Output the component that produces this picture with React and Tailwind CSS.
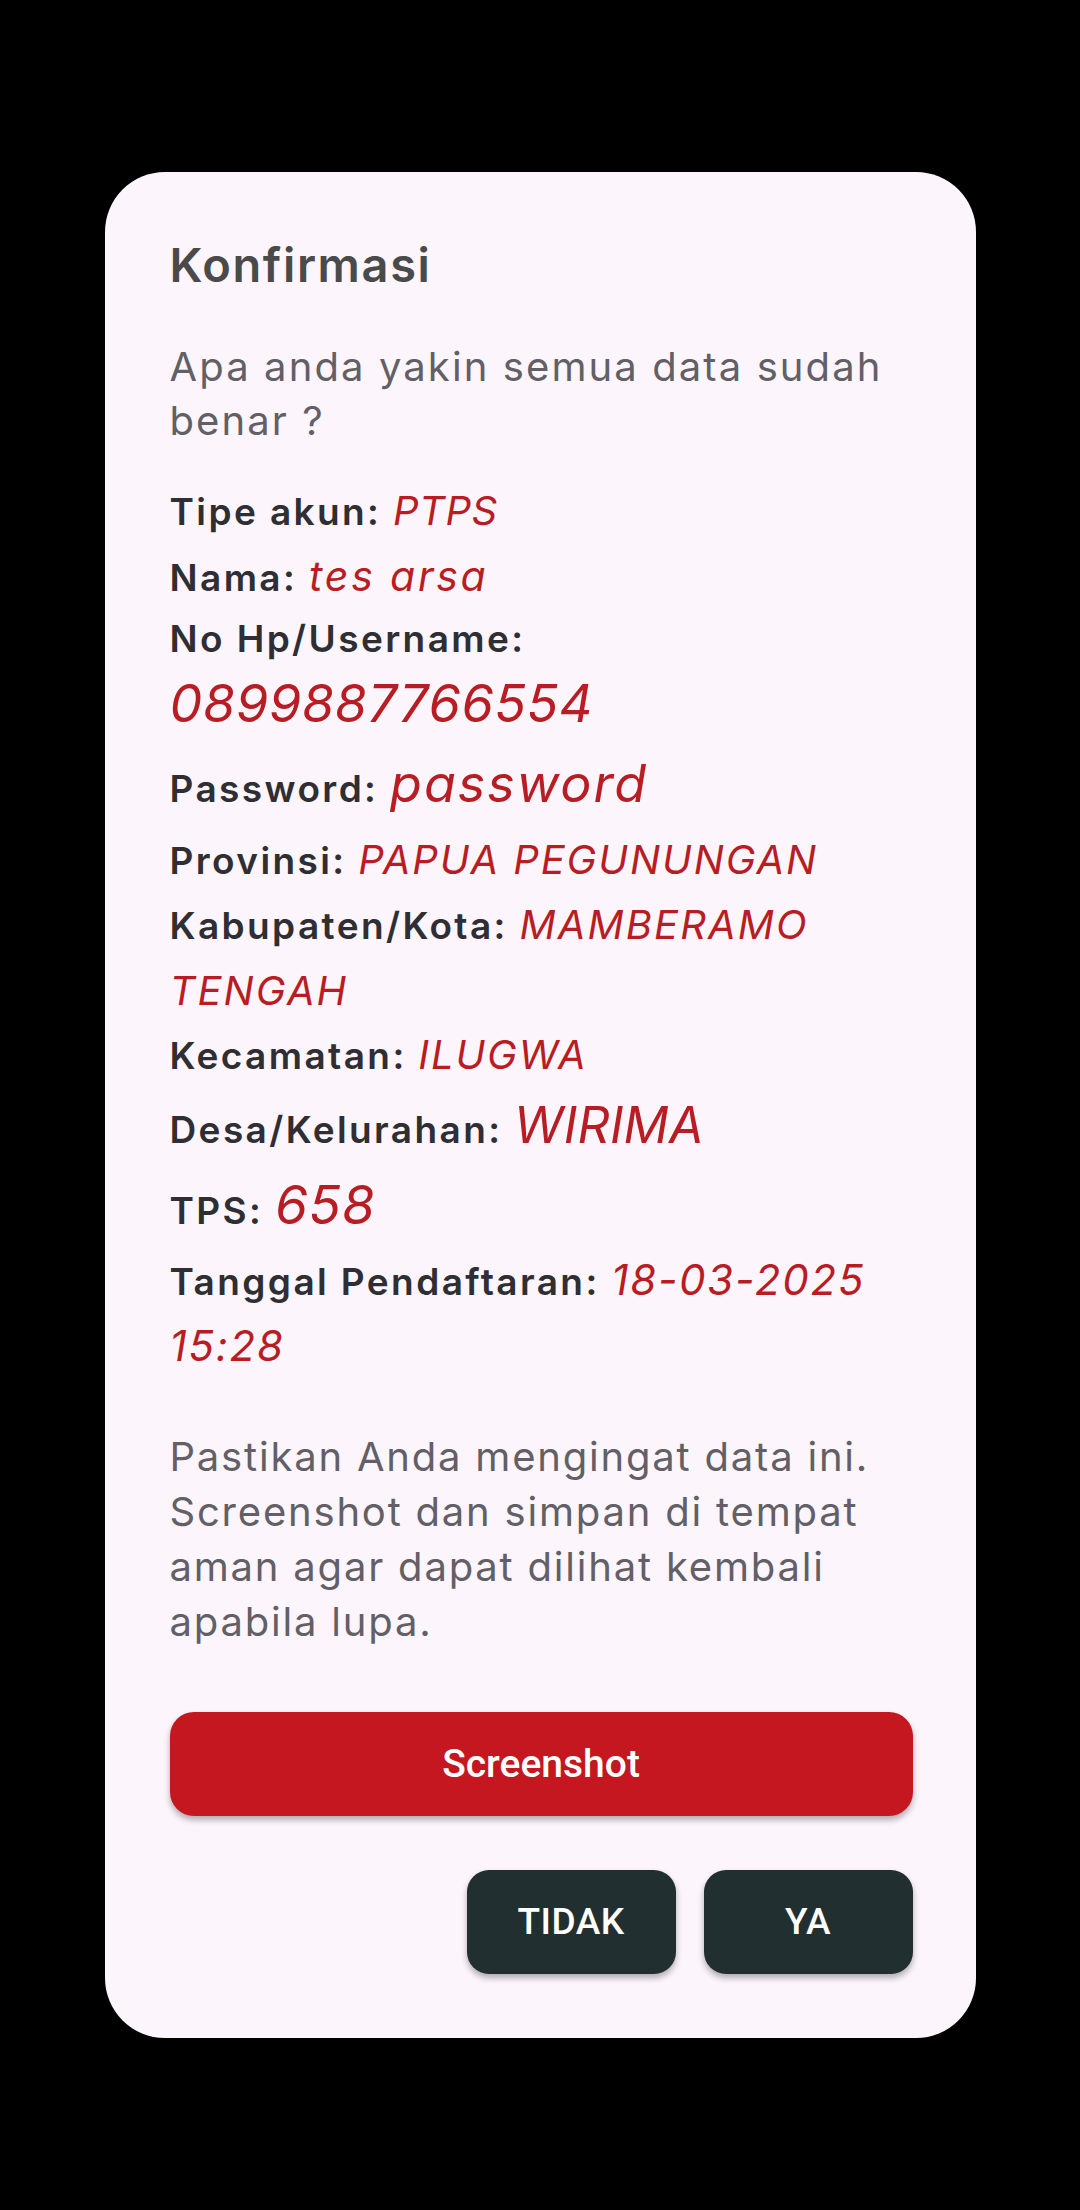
export default function App() {
    const val = 'italic font-normal text-[#b81d24]';

    return (
        <div className="min-h-[2210px] w-[1080px] bg-black pt-[172px] font-['Inter',sans-serif]">
            <div className="mx-auto w-[871px] rounded-[60px] bg-[#fcf5fc] pl-[65px] pr-[63px] pt-[63px] pb-[64px]">
                <h1 className="text-[47px] leading-[60px] font-semibold text-[#4a4a4a] tracking-[1.6px]">Konfirmasi</h1>

                <p className="mt-[45px] text-[40px] leading-[54px] text-[#625f66] tracking-[2.1px]">
                    Apa anda yakin semua data sudah benar ?
                </p>

                <div className="text-[#2e2e33] font-semibold text-[37px] tracking-[2.4px]">
                    <p className="mt-[31px] leading-[64px]">
                        Tipe akun: <span className={`${val} text-[40px] tracking-[0.5px]`}>PTPS</span>
                    </p>
                    <p className="leading-[64px]">
                        Nama: <span className={`${val} text-[41px] tracking-[2.8px]`}>tes arsa</span>
                    </p>
                    <p className="leading-[58px]">No Hp/Username:</p>
                    <p className={`${val} leading-[72px] text-[52px] tracking-[0.8px]`}>0899887766554</p>
                    <p className="mt-[4px] leading-[80px]">
                        Password: <span className={`${val} text-[52px] tracking-[2px]`}>password</span>
                    </p>
                    <p className="leading-[62px]">
                        Provinsi: <span className={`${val} text-[40px] tracking-[1.9px]`}>PAPUA PEGUNUNGAN</span>
                    </p>
                    <p className="leading-[65px]">
                        Kabupaten/Kota: <span className={`${val} text-[40px] tracking-[2.1px]`}>MAMBERAMO TENGAH</span>
                    </p>
                    <p className="leading-[62px]">
                        Kecamatan: <span className={`${val} text-[40px] tracking-[1.9px]`}>ILUGWA</span>
                    </p>
                    <p className="leading-[76px]">
                        Desa/Kelurahan: <span className={`${val} text-[50px] tracking-[0.3px]`}>WIRIMA</span>
                    </p>
                    <p className="leading-[74px]">
                        TPS: <span className={`${val} text-[53px] tracking-[1px]`}>658</span>
                    </p>
                    <p className="leading-[64px]">
                        Tanggal Pendaftaran: <span className={`${val} text-[42px] tracking-[1.8px]`}>18-03-2025 15:28</span>
                    </p>
                </div>

                <p className="mt-[49px] text-[40px] leading-[55px] text-[#625f66] tracking-[1.8px]">
                    Pastikan Anda mengingat data ini. Screenshot dan simpan di tempat aman agar dapat dilihat kembali apabila lupa.
                </p>

                <button className="mt-[63px] h-[104px] w-full rounded-[24px] bg-[#c4171f] text-white text-[39px] font-medium font-['Roboto',sans-serif] shadow-[0_4px_6px_rgba(0,0,0,0.3)]">
                    Screenshot
                </button>

                <div className="mt-[54px] flex justify-end gap-[28px]">
                    <button className="h-[104px] w-[209px] rounded-[22px] bg-[#222f30] text-white text-[37px] font-medium font-['Roboto',sans-serif] tracking-[0.5px] shadow-[0_4px_6px_rgba(0,0,0,0.3)]">
                        TIDAK
                    </button>
                    <button className="h-[104px] w-[209px] rounded-[22px] bg-[#222f30] text-white text-[37px] font-medium font-['Roboto',sans-serif] tracking-[0.5px] shadow-[0_4px_6px_rgba(0,0,0,0.3)]">
                        YA
                    </button>
                </div>
            </div>
        </div>
    );
}
